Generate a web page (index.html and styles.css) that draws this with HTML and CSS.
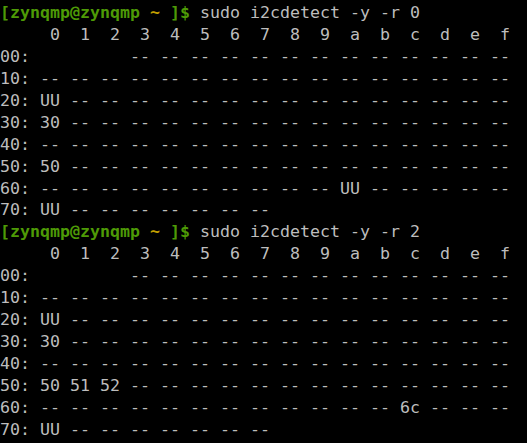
FILE: index.html
```html
<!DOCTYPE html>
<html>
<head>
<meta charset="utf-8">
<link rel="stylesheet" href="styles.css">
</head>
<body>
<div class="term">
<div class="line"><span class="p">[zynqmp@zynqmp </span><span class="h">~</span><span class="p"> ]$</span><span class="c"> sudo i2cdetect -y -r 0</span></div>
<div class="line">     0  1  2  3  4  5  6  7  8  9  a  b  c  d  e  f</div>
<div class="line">00:          -- -- -- -- -- -- -- -- -- -- -- -- --</div>
<div class="line">10: -- -- -- -- -- -- -- -- -- -- -- -- -- -- -- --</div>
<div class="line">20: UU -- -- -- -- -- -- -- -- -- -- -- -- -- -- --</div>
<div class="line">30: 30 -- -- -- -- -- -- -- -- -- -- -- -- -- -- --</div>
<div class="line">40: -- -- -- -- -- -- -- -- -- -- -- -- -- -- -- --</div>
<div class="line">50: 50 -- -- -- -- -- -- -- -- -- -- -- -- -- -- --</div>
<div class="line">60: -- -- -- -- -- -- -- -- -- -- UU -- -- -- -- --</div>
<div class="line">70: UU -- -- -- -- -- -- --</div>
<div class="line"><span class="p">[zynqmp@zynqmp </span><span class="h">~</span><span class="p"> ]$</span><span class="c"> sudo i2cdetect -y -r 2</span></div>
<div class="line">     0  1  2  3  4  5  6  7  8  9  a  b  c  d  e  f</div>
<div class="line">00:          -- -- -- -- -- -- -- -- -- -- -- -- --</div>
<div class="line">10: -- -- -- -- -- -- -- -- -- -- -- -- -- -- -- --</div>
<div class="line">20: UU -- -- -- -- -- -- -- -- -- -- -- -- -- -- --</div>
<div class="line">30: 30 -- -- -- -- -- -- -- -- -- -- -- -- -- -- --</div>
<div class="line">40: -- -- -- -- -- -- -- -- -- -- -- -- -- -- -- --</div>
<div class="line">50: 50 51 52 -- -- -- -- -- -- -- -- -- -- -- -- --</div>
<div class="line">60: -- -- -- -- -- -- -- -- -- -- -- -- 6c -- -- --</div>
<div class="line">70: UU -- -- -- -- -- -- --</div>
</div>
</body>
</html>
```
FILE: styles.css
```css
html, body {
  margin: 0;
  padding: 0;
  background: #000000;
  width: 527px;
  height: 443px;
  overflow: hidden;
}
.term {
  display: flex;
  flex-direction: column;
  padding: 2px 0 0 0;
  font-family: "DejaVu Sans Mono", monospace;
  font-size: 16.61px;
  line-height: 21.94px;
  color: #bdbdbd;
}
.line {
  white-space: pre;
  height: 21.94px;
}
.p {
  color: #4e9a06;
  font-weight: bold;
}
.h {
  color: #c4a000;
  font-weight: bold;
}
.c {
  color: #bdbdbd;
}
```
